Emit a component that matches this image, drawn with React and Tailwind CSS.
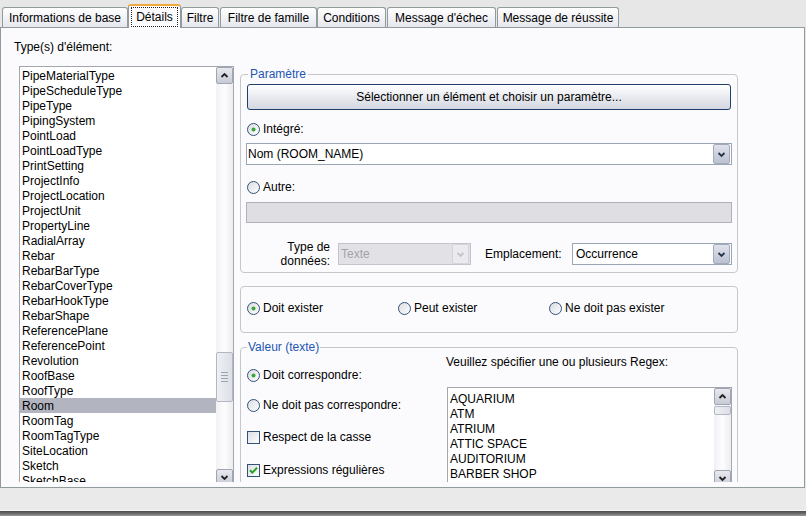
import React from "react";

const items = [
  "PipeMaterialType", "PipeScheduleType", "PipeType", "PipingSystem", "PointLoad",
  "PointLoadType", "PrintSetting", "ProjectInfo", "ProjectLocation", "ProjectUnit",
  "PropertyLine", "RadialArray", "Rebar", "RebarBarType", "RebarCoverType",
  "RebarHookType", "RebarShape", "ReferencePlane", "ReferencePoint", "Revolution",
  "RoofBase", "RoofType", "Room", "RoomTag", "RoomTagType", "SiteLocation", "Sketch", "SketchBase",
];

const regex = ["AQUARIUM", "ATM", "ATRIUM", "ATTIC SPACE", "AUDITORIUM", "BARBER SHOP"];

function Radio({ checked }) {
  return (
    <svg width="13" height="13" viewBox="0 0 13 13" className="shrink-0">
      <defs>
        <linearGradient id="radiog" x1="0" y1="0" x2="1" y2="1">
          <stop offset="0" stopColor="#d9dbe0" />
          <stop offset="1" stopColor="#ffffff" />
        </linearGradient>
      </defs>
      <circle cx="6.5" cy="6.5" r="6" fill="url(#radiog)" stroke="#33527a" strokeWidth="1" />
      {checked && <circle cx="6.5" cy="6.5" r="2" fill="#3aa63a" />}
    </svg>
  );
}

function Check({ checked }) {
  return (
    <svg width="13" height="13" viewBox="0 0 13 13" className="shrink-0">
      <defs>
        <linearGradient id="checkg" x1="0" y1="0" x2="1" y2="1">
          <stop offset="0" stopColor="#dcdde2" />
          <stop offset="1" stopColor="#ffffff" />
        </linearGradient>
      </defs>
      <rect x="0.5" y="0.5" width="12" height="12" fill="url(#checkg)" stroke="#33527a" />
      {checked && (
        <path d="M3 6.2 L5.3 8.6 L10 3.8" stroke="#21a121" strokeWidth="2" fill="none" />
      )}
    </svg>
  );
}

function Chevron({ up, color = "#2b2b2b" }) {
  return (
    <svg width="15" height="15" viewBox="0 0 15 15">
      {up ? (
        <path d="M4.5 9 L7.5 6 L10.5 9" stroke={color} strokeWidth="1.8" fill="none" />
      ) : (
        <path d="M4.5 6 L7.5 9 L10.5 6" stroke={color} strokeWidth="1.8" fill="none" />
      )}
    </svg>
  );
}

function ScrollBtn({ up }) {
  return (
    <div className="h-[17px] w-[17px] shrink-0 rounded-[2px] border border-[#9fa5b3] bg-gradient-to-b from-[#e7e9ee] to-[#c8cbd5] flex items-center justify-center">
      <Chevron up={up} color="#222" />
    </div>
  );
}

function DropBtn({ disabled }) {
  return disabled ? (
    <div className="h-[20px] w-[17px] mr-[1px] shrink-0 rounded-[2px] border border-[#d3d5db] bg-[#ebebef] flex items-center justify-center">
      <Chevron color="#c4c4c8" />
    </div>
  ) : (
    <div className="h-[20px] w-[17px] mr-[1px] shrink-0 rounded-[2px] border border-[#a3aabb] bg-gradient-to-b from-[#e0e3ec] to-[#bcc1d0] flex items-center justify-center">
      <Chevron color="#26334f" />
    </div>
  );
}

function Tab({ w, children }) {
  return (
    <div className={`${w} h-[20px] shrink-0 rounded-t-[3px] border-t border-x border-[#919b9c] bg-gradient-to-b from-[#ffffff] to-[#e6e7ee] flex items-center justify-center pt-[1px] leading-[14px] whitespace-nowrap`}>
      {children}
    </div>
  );
}

export default function App() {
  return (
    <div className="w-[806px] h-[516px] overflow-hidden bg-[#e7e7e7] flex flex-col font-['Liberation_Sans',Arial,sans-serif] text-[12px] text-black">
      {/* Tabs */}
      <div className="h-[27px] shrink-0 flex items-end pl-[2px] relative z-10">
        <Tab w="w-[126px]">Informations de base</Tab>
        <div className="w-[53px] h-[24px] -mb-[1px] shrink-0 rounded-t-[3px] border-x border-[#919b9c] border-t-2 border-t-[#f2a93b] bg-[#fbfbfd] flex flex-col">
          <div className="mx-[2px] mt-[1px] mb-[1px] flex-1 border border-dotted border-[#222] flex items-center justify-center leading-[14px]">
            Détails
          </div>
        </div>
        <Tab w="w-[38px]">Filtre</Tab>
        <div className="w-[1px] shrink-0" />
        <Tab w="w-[97px]">Filtre de famille</Tab>
        <Tab w="w-[69px]">Conditions</Tab>
        <div className="w-[1px] shrink-0" />
        <Tab w="w-[109px]">Message d'échec</Tab>
        <div className="w-[1px] shrink-0" />
        <Tab w="w-[122px]">Message de réussite</Tab>
      </div>

      {/* Panel */}
      <div className="w-[805px] h-[461px] shrink-0 border border-[#919b9c] bg-[#fbfbfd]">
        <div className="h-[454px] overflow-hidden flex items-start">
          {/* Left column */}
          <div className="w-[233px] shrink-0 flex flex-col">
            <div className="pl-[13px] pt-[12px] leading-[14px]">Type(s) d'élément:</div>
            <div className="ml-[18px] mt-[12px] w-[215px] h-[421px] shrink-0 border border-[#a3a7ae] bg-white flex">
              <div className="flex-1 min-w-0 pt-[1px] flex flex-col overflow-hidden">
                {items.map((it) => (
                  <div
                    key={it}
                    className={
                      it === "Room"
                        ? "h-[15px] shrink-0 leading-[17px] pl-[2px] bg-[#b2b4bf] whitespace-nowrap"
                        : "h-[15px] shrink-0 leading-[17px] pl-[2px] whitespace-nowrap"
                    }
                  >
                    {it}
                  </div>
                ))}
              </div>
              <div className="w-[17px] shrink-0 flex flex-col bg-gradient-to-r from-[#f1f1f5] via-[#fdfdfe] to-[#ececf1]">
                <ScrollBtn up />
                <div className="flex-1 flex flex-col min-h-0">
                  <div className="h-[268px] shrink-0" />
                  <div className="h-[50px] shrink-0 rounded-[2px] border border-[#b3b7c3] bg-gradient-to-r from-[#eef0f4] to-[#dcdfe7] flex flex-col items-center justify-center gap-[2px]">
                    <div className="w-[7px] h-[1px] bg-[#9ea3b0]" />
                    <div className="w-[7px] h-[1px] bg-[#9ea3b0]" />
                    <div className="w-[7px] h-[1px] bg-[#9ea3b0]" />
                    <div className="w-[7px] h-[1px] bg-[#9ea3b0]" />
                  </div>
                </div>
                <ScrollBtn />
              </div>
            </div>
          </div>

          {/* Right column */}
          <div className="ml-[6px] w-[498px] shrink-0 flex flex-col">
            {/* Paramètre */}
            <fieldset className="mt-[39px] border border-[#c6c7cb] rounded-[4px] px-[6px] pb-[4px] min-w-0">
              <legend className="ml-[1px] px-[2px] leading-[14px] text-[#2356b3]">Paramètre</legend>
              <div className="mt-[3px] h-[26px] rounded-[3px] border border-[#20406a] bg-gradient-to-b from-[#ffffff] to-[#d4d7e1] flex items-center justify-center leading-[14px]">
                Sélectionner un élément et choisir un paramètre...
              </div>
              <div className="mt-[11px] h-[16px] flex items-center gap-[3px]">
                <Radio checked />
                <span className="leading-[14px]">Intégré:</span>
              </div>
              <div className="mt-[6px] -mx-[1px] h-[22px] border border-[#9aa6b5] bg-white flex items-center">
                <span className="flex-1 pl-[1px] leading-[14px]">Nom (ROOM_NAME)</span>
                <DropBtn />
              </div>
              <div className="mt-[14px] h-[16px] flex items-center gap-[3px]">
                <Radio />
                <span className="leading-[14px]">Autre:</span>
              </div>
              <div className="mt-[7px] -mx-[1px] h-[21px] border border-[#aeb3ba] bg-[#dfdfe3]" />
              <div className="mt-[17px] h-[28px] flex items-center">
                <div className="w-[83px] shrink-0 text-right leading-[14px]">
                  Type de
                  <br />
                  données:
                </div>
                <div className="ml-[8px] w-[133px] h-[22px] shrink-0 border border-[#c2c6cc] bg-[#e2e2e6] flex items-center">
                  <span className="flex-1 pl-[2px] text-[#a3a3a7] leading-[14px]">Texte</span>
                  <DropBtn disabled />
                </div>
                <div className="ml-[14px] w-[87px] shrink-0 leading-[14px]">Emplacement:</div>
                <div className="flex-1 -mr-[1px] h-[22px] border border-[#9aa6b5] bg-white flex items-center">
                  <span className="flex-1 pl-[3px] leading-[14px]">Occurrence</span>
                  <DropBtn />
                </div>
              </div>
            </fieldset>

            {/* Existence */}
            <div className="mt-[13px] h-[47px] border border-[#c6c7cb] rounded-[4px] pl-[6px] pt-[13px] flex items-start">
              <div className="w-[151px] h-[16px] flex items-center gap-[3px]">
                <Radio checked />
                <span className="leading-[14px]">Doit exister</span>
              </div>
              <div className="w-[151px] h-[16px] flex items-center gap-[3px]">
                <Radio />
                <span className="leading-[14px]">Peut exister</span>
              </div>
              <div className="h-[16px] flex items-center gap-[3px]">
                <Radio />
                <span className="leading-[14px]">Ne doit pas exister</span>
              </div>
            </div>

            {/* Valeur */}
            <fieldset className="mt-[7px] h-[170px] border border-[#c6c7cb] rounded-[4px] px-[6px] min-w-0">
              <legend className="px-[1px] leading-[14px] text-[#2356b3]">Valeur (texte)</legend>
              <div className="flex">
                <div className="w-[199px] shrink-0 flex flex-col">
                  <div className="mt-[13px] h-[16px] flex items-center gap-[3px]">
                    <Radio checked />
                    <span className="leading-[14px]">Doit correspondre:</span>
                  </div>
                  <div className="mt-[14px] h-[16px] flex items-center gap-[3px]">
                    <Radio />
                    <span className="leading-[14px]">Ne doit pas correspondre:</span>
                  </div>
                  <div className="mt-[16px] h-[16px] flex items-center gap-[3px]">
                    <Check />
                    <span className="leading-[14px]">Respect de la casse</span>
                  </div>
                  <div className="mt-[17px] h-[16px] flex items-center gap-[3px]">
                    <Check checked />
                    <span className="leading-[14px]">Expressions régulières</span>
                  </div>
                </div>
                <div className="flex-1 min-w-0 flex flex-col">
                  <div className="mt-[1px] leading-[14px] whitespace-nowrap">
                    Veuillez spécifier une ou plusieurs Regex:
                  </div>
                  <div className="mt-[18px] ml-[1px] w-[285px] h-[101px] shrink-0 border border-[#a3a7ae] bg-white flex">
                    <div className="flex-1 min-w-0 pt-[3px] pl-[2px] flex flex-col overflow-hidden">
                      {regex.map((r) => (
                        <div key={r} className="h-[15px] shrink-0 leading-[17px] whitespace-nowrap">
                          {r}
                        </div>
                      ))}
                    </div>
                    <div className="w-[17px] shrink-0 flex flex-col bg-gradient-to-r from-[#f1f1f5] via-[#fdfdfe] to-[#ececf1]">
                      <ScrollBtn up />
                      <div className="flex-1 flex flex-col min-h-0">
                        <div className="h-[1px] shrink-0" />
                        <div className="h-[9px] shrink-0 rounded-[2px] border border-[#b3b7c3] bg-gradient-to-r from-[#eef0f4] to-[#dcdfe7]" />
                      </div>
                      <ScrollBtn />
                    </div>
                  </div>
                </div>
              </div>
            </fieldset>
          </div>
        </div>
      </div>

      {/* Bottom bar */}
      <div className="h-[23px] shrink-0 bg-[#eaeaea] border-b border-[#f6f6f6]" />
      <div className="h-[5px] shrink-0 bg-gradient-to-b from-[#4a4a4a] via-[#6b6b6b] to-[#9a9a9a]" />
    </div>
  );
}
